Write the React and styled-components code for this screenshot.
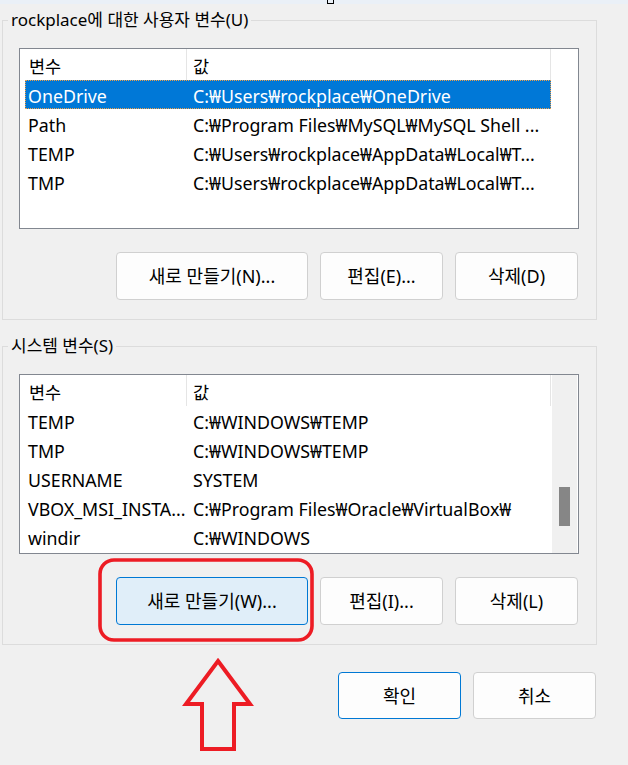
import React from "react";
import styled, { createGlobalStyle } from "styled-components";

const Global = createGlobalStyle`
  * { box-sizing: border-box; }
  html, body { margin: 0; padding: 0; background: #f0f0f0; }
  body {
    font-family: "Noto Sans", "Noto Sans CJK KR", sans-serif;
    font-size: 17px;
    color: #000;
    overflow: hidden;
  }
`;

const Page = styled.div`
  position: relative;
  width: 628px;
  height: 765px;
  background: #f0f0f0;
  overflow: hidden;
`;

const TopStrip = styled.div`
  position: relative;
  height: 4px;
  background: #eaf0f7;
`;

const Grip = styled.span`
  position: absolute;
  left: 327px;
  top: 0;
  width: 7px;
  height: 4px;
  border: 1px solid #000;
  border-top: none;
`;

const Group = styled.fieldset`
  margin: ${(p) => p.$top}px 0 0 2px;
  width: 595px;
  min-width: 0;
  border: 1px solid #dcdcdc;
  padding: 16px 0 19px 5px;
`;

const Legend = styled.legend`
  padding: 0 3px;
  height: 24px;
  line-height: 24px;
  font-size: 17px;
`;

const ListView = styled.div`
  margin-left: 11px;
  width: 560px;
  height: ${(p) => p.$h}px;
  border: 1px solid #828790;
  background: #fff;
  display: flex;
  overflow: hidden;
`;

const Main = styled.div`
  flex: 1;
  min-width: 0;
`;

const Header = styled.div`
  display: flex;
  height: 31px;
`;

const HeadCell = styled.div`
  width: ${(p) => p.$w}px;
  padding-left: ${(p) => p.$pad}px;
  padding-top: 3px;
  line-height: 28px;
  font-size: 17.5px;
  border-right: 1px solid #e5e5e5;
  white-space: nowrap;
`;

const Row = styled.div`
  display: grid;
  grid-template-columns: 161px 1fr;
  margin-left: 5px;
  width: 526px;
  height: 29px;
  padding-top: 3px;
  line-height: 26px;
  font-size: 17.8px;
  white-space: nowrap;
  background: ${(p) => (p.$selected ? "#0078d7" : "transparent")};
  color: ${(p) => (p.$selected ? "#fff" : "#000")};
  outline: ${(p) => (p.$selected ? "1px dotted #f0a048" : "none")};
  outline-offset: -1px;
`;

const NameCell = styled.span`
  padding-left: 3px;
  overflow: hidden;
`;

const ValueCell = styled.span`
  padding-left: 7px;
  overflow: hidden;
`;

const ScrollBar = styled.div`
  width: 25px;
  margin-right: 1px;
  background: #f0f0f0;
  padding-left: 7px;
  padding-top: ${(p) => p.$offset}px;
`;

const Thumb = styled.div`
  width: 11px;
  height: 39px;
  background: #868686;
`;

const ButtonRow = styled.div`
  display: flex;
  justify-content: flex-end;
  gap: 12px;
  margin: 23px 0 0 11px;
  width: 560px;
  padding-right: 1px;
`;

const Button = styled.button`
  width: ${(p) => p.$w}px;
  height: ${(p) => p.$h || 48}px;
  border: 1px solid ${(p) => (p.$accent ? "#0078d4" : "#d0d0d0")};
  border-radius: 4px;
  background: ${(p) => (p.$hover ? "#e0eef9" : "#fdfdfd")};
  font-family: inherit;
  font-size: 18px;
  color: #000;
  padding: 0;
  line-height: 1;
`;

const DialogRow = styled.div`
  display: flex;
  justify-content: flex-end;
  gap: 12px;
  margin-top: 27px;
  padding-right: 32px;
`;

const Overlay = styled.svg`
  position: absolute;
  left: 0;
  top: 0;
  pointer-events: none;
`;

const userVars = [
  ["OneDrive", "C:₩Users₩rockplace₩OneDrive", true],
  ["Path", "C:₩Program Files₩MySQL₩MySQL Shell ..."],
  ["TEMP", "C:₩Users₩rockplace₩AppData₩Local₩T..."],
  ["TMP", "C:₩Users₩rockplace₩AppData₩Local₩T..."],
];

const sysVars = [
  ["TEMP", "C:₩WINDOWS₩TEMP"],
  ["TMP", "C:₩WINDOWS₩TEMP"],
  ["USERNAME", "SYSTEM"],
  ["VBOX_MSI_INSTA...", "C:₩Program Files₩Oracle₩VirtualBox₩"],
  ["windir", "C:₩WINDOWS"],
];

function VarList({ rows, height, scroll }) {
  return (
    <ListView $h={height}>
      <Main>
        <Header>
          <HeadCell $w={167} $pad={9}>변수</HeadCell>
          <HeadCell $w={364} $pad={6}>값</HeadCell>
        </Header>
        {rows.map(([n, v, sel], i) => (
          <Row key={i} $selected={sel}>
            <NameCell>{n}</NameCell>
            <ValueCell>{v}</ValueCell>
          </Row>
        ))}
      </Main>
      {scroll && (
        <ScrollBar $offset={112}>
          <Thumb />
        </ScrollBar>
      )}
    </ListView>
  );
}

export default function App() {
  return (
    <Page>
      <Global />
      <TopStrip>
        <Grip />
      </TopStrip>
      <Group $top={4}>
        <Legend>rockplace에 대한 사용자 변수(U)</Legend>
        <VarList rows={userVars} height={181} />
        <ButtonRow>
          <Button $w={192}>새로 만들기(N)...</Button>
          <Button $w={123}>편집(E)...</Button>
          <Button $w={123}>삭제(D)</Button>
        </ButtonRow>
      </Group>
      <Group $top={14}>
        <Legend>시스템 변수(S)</Legend>
        <VarList rows={sysVars} height={180} scroll />
        <ButtonRow>
          <Button $w={192} $accent $hover>새로 만들기(W)...</Button>
          <Button $w={123}>편집(I)...</Button>
          <Button $w={123}>삭제(L)</Button>
        </ButtonRow>
      </Group>
      <DialogRow>
        <Button $w={123} $h={47} $accent>확인</Button>
        <Button $w={123} $h={47}>취소</Button>
      </DialogRow>
      <Overlay width="628" height="765" viewBox="0 0 628 765">
        <rect x="100" y="560" width="212" height="80" rx="14" ry="14" fill="none" stroke="#ed1c24" strokeWidth="3.6" />
        <polygon
          points="218,661 250,704 234,704 234,749 202,749 202,704 186,704"
          fill="none"
          stroke="#ed1c24"
          strokeWidth="4"
          strokeLinejoin="miter"
        />
      </Overlay>
    </Page>
  );
}
